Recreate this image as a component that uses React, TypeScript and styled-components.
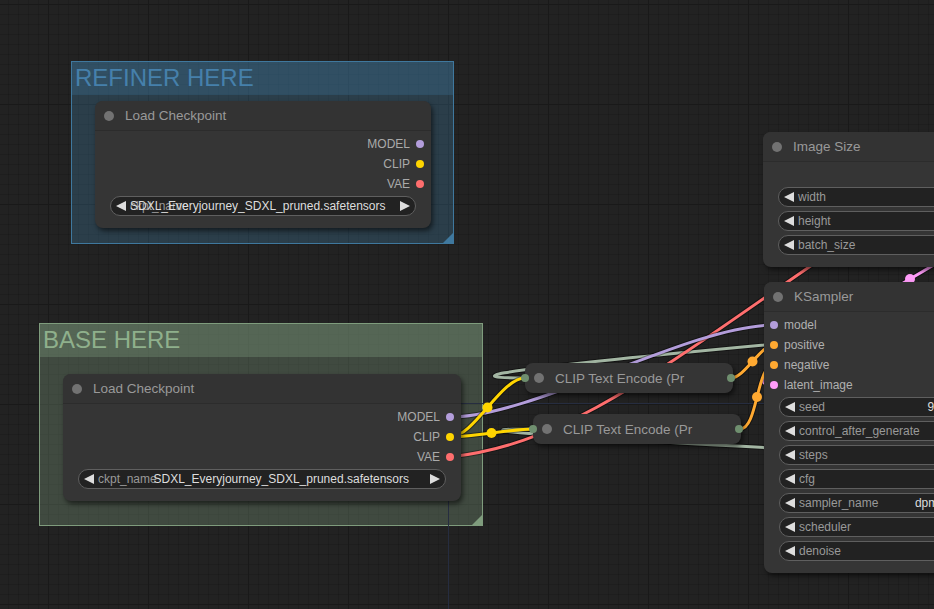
import React from "react";
import styled, { createGlobalStyle } from "styled-components";

const GlobalStyle = createGlobalStyle`
  html, body {
    margin: 0;
    padding: 0;
    background: #222;
    overflow: hidden;
  }
  body {
    font-family: "Liberation Sans", Arial, sans-serif;
  }
`;

const Canvas = styled.div`
  position: relative;
  width: 934px;
  height: 609px;
  overflow: hidden;
  background-color: #222;
  background-image: linear-gradient(to right, #191919 1px, transparent 1px),
    linear-gradient(to bottom, #191919 1px, transparent 1px),
    linear-gradient(to right, rgba(0, 0, 0, 0.13) 1px, transparent 1px),
    linear-gradient(to bottom, rgba(0, 0, 0, 0.13) 1px, transparent 1px);
  background-size: 100px 100px, 100px 100px, 10px 10px, 10px 10px;
  background-position: 48px 0, 0 4px, 8px 0, 0 4px;
`;

type Box = { $x: number; $y: number; $w: number };

const Group = styled.div<Box & { $h: number; $c: string; $fill: string }>`
  position: absolute;
  left: ${(p) => p.$x}px;
  top: ${(p) => p.$y}px;
  width: ${(p) => p.$w}px;
  height: ${(p) => p.$h}px;
  box-sizing: border-box;
  border: 1px solid ${(p) => p.$c};
  background: ${(p) => p.$fill};
  &::after {
    content: "";
    position: absolute;
    right: 0;
    bottom: 0;
    width: 10px;
    height: 10px;
    background: ${(p) => p.$c};
    clip-path: polygon(100% 0, 100% 100%, 0 100%);
  }
`;
const GroupTitle = styled.div<{ $c: string; $fill: string }>`
  height: 33px;
  line-height: 32px;
  padding-left: 3px;
  font-size: 24px;
  color: ${(p) => p.$c};
  background: ${(p) => p.$fill};
  white-space: nowrap;
`;

const Node = styled.div<Box>`
  position: absolute;
  left: ${(p) => p.$x}px;
  top: ${(p) => p.$y}px;
  width: ${(p) => p.$w}px;
  display: flex;
  flex-direction: column;
  padding-bottom: 12px;
  background: #353535;
  border-radius: 8px;
  box-shadow: 2px 3px 5px rgba(0, 0, 0, 0.55);
`;
const NodeHeader = styled.div`
  height: 30px;
  box-sizing: border-box;
  display: flex;
  align-items: center;
  gap: 11px;
  padding-left: 9px;
  background: #333;
  border-radius: 8px 8px 0 0;
  border-bottom: 1px solid #2c2c2c;
  color: #999;
  font-size: 13.5px;
  white-space: nowrap;
`;
const TitleDot = styled.span`
  width: 10px;
  height: 10px;
  border-radius: 50%;
  background: #727272;
  flex: none;
`;
const Slots = styled.div`
  display: flex;
  flex-direction: column;
  padding-top: 3px;
`;
const OutRow = styled.div`
  height: 20px;
  display: flex;
  align-items: center;
  justify-content: flex-end;
  gap: 6px;
  padding-right: 7px;
  color: #aaa;
  font-size: 12px;
`;
const InRow = styled.div`
  height: 20px;
  display: flex;
  align-items: center;
  gap: 6px;
  padding-left: 6px;
  color: #b0b0b0;
  font-size: 12px;
`;
const SlotDot = styled.span<{ $c: string }>`
  width: 8px;
  height: 8px;
  border-radius: 50%;
  background: ${(p) => p.$c};
  flex: none;
`;
const EmptyRow = styled.div`
  height: 20px;
`;

const Widgets = styled.div`
  display: flex;
  flex-direction: column;
  gap: 4px;
  margin-top: 2px;
  padding: 0 15px;
`;
const Widget = styled.div`
  height: 20px;
  box-sizing: border-box;
  display: grid;
  grid-template-columns: 10px minmax(0, 1fr) 10px;
  column-gap: 4px;
  align-items: center;
  padding: 0 5px;
  background: #222;
  border: 1px solid #5f5f5f;
  border-radius: 10px;
  font-size: 12px;
  white-space: nowrap;
`;
const Arrow = styled.span<{ $dir: "left" | "right" }>`
  width: 10px;
  height: 10px;
  background: #ddd;
  clip-path: ${(p) =>
    p.$dir === "left"
      ? "polygon(100% 0, 0 50%, 100% 100%)"
      : "polygon(0 0, 100% 50%, 0 100%)"};
`;
const WidgetText = styled.div`
  display: grid;
  padding-right: 17px;
  & > * {
    grid-area: 1 / 1;
  }
`;
const WidgetLabel = styled.span`
  justify-self: start;
  color: #999;
`;
const WidgetValue = styled.span`
  justify-self: unsafe end;
  color: #ddd;
`;

const CollapsedNode = styled.div<Box>`
  position: absolute;
  left: ${(p) => p.$x}px;
  top: ${(p) => p.$y}px;
  width: ${(p) => p.$w}px;
  height: 30px;
  box-sizing: border-box;
  display: flex;
  align-items: center;
  gap: 11px;
  padding-left: 9px;
  background: #353535;
  border-radius: 8px;
  box-shadow: 2px 3px 5px rgba(0, 0, 0, 0.55);
  color: #999;
  font-size: 13.5px;
  white-space: nowrap;
`;
const EdgeDot = styled.span<{ $side: "in" | "out" }>`
  position: absolute;
  top: 11px;
  ${(p) => (p.$side === "in" ? "left: -4px;" : "right: -2px;")}
  width: 8px;
  height: 8px;
  border-radius: 50%;
  background: #6f8f6f;
`;

const WireLayer = styled.svg`
  position: absolute;
  left: 0;
  top: 0;
  pointer-events: none;
`;

type P = [number, number];
type Link = { color: string; from?: P; to?: P; d?: string; dot?: boolean };

const spline = (a: P, b: P) => {
  const o = Math.hypot(b[0] - a[0], b[1] - a[1]) * 0.25;
  const c1: P = [a[0] + o, a[1]];
  const c2: P = [b[0] - o, b[1]];
  return {
    d: `M ${a[0]} ${a[1]} C ${c1[0]} ${c1[1]}, ${c2[0]} ${c2[1]}, ${b[0]} ${b[1]}`,
    mid: [
      (a[0] + 3 * c1[0] + 3 * c2[0] + b[0]) / 8,
      (a[1] + 3 * c1[1] + 3 * c2[1] + b[1]) / 8,
    ] as P,
  };
};

// links come from nodes beyond the right edge where no endpoint is visible
const links: Link[] = [
  { color: "#a3b6a3", from: [1600, 258], to: [525, 378] },
  { color: "#a3b6a3", from: [1600, 498], to: [533, 429] },
  { color: "#ff9cf9", from: [1046, 173], to: [774, 385], dot: true },
  { color: "#ff6e6e", d: "M 450 457 C 600 440, 700 330, 1000 140" },
  { color: "#b39ddb", from: [450, 417], to: [774, 325], dot: true },
  { color: "#ffd500", from: [450, 437], to: [525, 378], dot: true },
  { color: "#ffd500", from: [450, 437], to: [533, 429], dot: true },
  { color: "#ffa931", from: [731, 378], to: [774, 345], dot: true },
  { color: "#ffa931", from: [740, 429], to: [774, 365], dot: true },
];

const Wires = () => (
  <WireLayer width={934} height={609}>
    <line x1={448.5} y1={404} x2={448.5} y2={609} stroke="#262d40" strokeWidth={1} />
    <line x1={448} y1={403.5} x2={934} y2={403.5} stroke="#262d40" strokeWidth={1} />
    {links.map((l, i) => {
      const s = l.from && l.to ? spline(l.from, l.to) : null;
      const d = s ? s.d : l.d!;
      return (
        <g key={i}>
          <path d={d} fill="none" stroke="rgba(0,0,0,0.4)" strokeWidth={5} />
          <path d={d} fill="none" stroke={l.color} strokeWidth={3} />
          {s && l.dot && <circle cx={s.mid[0]} cy={s.mid[1]} r={5} fill={l.color} />}
        </g>
      );
    })}
  </WireLayer>
);

type W = { label: string; value?: string };

const WidgetRow = ({ label, value }: W) => (
  <Widget>
    <Arrow $dir="left" />
    <WidgetText>
      <WidgetLabel>{label}</WidgetLabel>
      {value && <WidgetValue>{value}</WidgetValue>}
    </WidgetText>
    <Arrow $dir="right" />
  </Widget>
);

const outs = [
  { name: "MODEL", color: "#b39ddb" },
  { name: "CLIP", color: "#ffd500" },
  { name: "VAE", color: "#ff6e6e" },
];

const LoadCheckpoint = ({ x, y, w }: { x: number; y: number; w: number }) => (
  <Node $x={x} $y={y} $w={w}>
    <NodeHeader>
      <TitleDot />
      Load Checkpoint
    </NodeHeader>
    <Slots>
      {outs.map((o) => (
        <OutRow key={o.name}>
          {o.name}
          <SlotDot $c={o.color} />
        </OutRow>
      ))}
    </Slots>
    <Widgets>
      <WidgetRow label="ckpt_name" value="SDXL_Everyjourney_SDXL_pruned.safetensors" />
    </Widgets>
  </Node>
);

const ksInputs = [
  { name: "model", color: "#b39ddb" },
  { name: "positive", color: "#ffa931" },
  { name: "negative", color: "#ffa931" },
  { name: "latent_image", color: "#ff9cf9" },
];
const ksWidgets: W[] = [
  { label: "seed", value: "95340891726" },
  { label: "control_after_generate", value: "randomize" },
  { label: "steps", value: "25" },
  { label: "cfg", value: "7.0" },
  { label: "sampler_name", value: "dpmpp_2m_sde" },
  { label: "scheduler", value: "karras" },
  { label: "denoise", value: "1.00" },
];

export default function App() {
  return (
    <>
      <GlobalStyle />
      <Canvas>
        <Group $x={71} $y={61} $w={383} $h={183} $c="#3f789e" $fill="rgba(63,120,158,0.32)">
          <GroupTitle $c="#4680ab" $fill="rgba(63,120,158,0.3)">REFINER HERE</GroupTitle>
        </Group>
        <Group $x={39} $y={323} $w={444} $h={203} $c="#7f9c7d" $fill="rgba(136,170,136,0.3)">
          <GroupTitle $c="#8fb08c" $fill="rgba(136,170,136,0.3)">BASE HERE</GroupTitle>
        </Group>

        <Wires />

        <LoadCheckpoint x={95} y={101} w={336} />
        <LoadCheckpoint x={63} y={374} w={398} />

        <CollapsedNode $x={525} $y={363} $w={208}>
          <EdgeDot $side="in" />
          <TitleDot />
          CLIP Text Encode (Pr
          <EdgeDot $side="out" />
        </CollapsedNode>
        <CollapsedNode $x={533} $y={414} $w={208}>
          <EdgeDot $side="in" />
          <TitleDot />
          CLIP Text Encode (Pr
          <EdgeDot $side="out" />
        </CollapsedNode>

        <Node $x={763} $y={132} $w={315}>
          <NodeHeader>
            <TitleDot />
            Image Size
          </NodeHeader>
          <Slots>
            <EmptyRow />
          </Slots>
          <Widgets>
            <WidgetRow label="width" value="1024" />
            <WidgetRow label="height" value="1024" />
            <WidgetRow label="batch_size" value="1" />
          </Widgets>
        </Node>

        <Node $x={764} $y={282} $w={289}>
          <NodeHeader>
            <TitleDot />
            KSampler
          </NodeHeader>
          <Slots>
            {ksInputs.map((s) => (
              <InRow key={s.name}>
                <SlotDot $c={s.color} />
                {s.name}
              </InRow>
            ))}
          </Slots>
          <Widgets>
            {ksWidgets.map((w) => (
              <WidgetRow key={w.label} {...w} />
            ))}
          </Widgets>
        </Node>
      </Canvas>
    </>
  );
}
